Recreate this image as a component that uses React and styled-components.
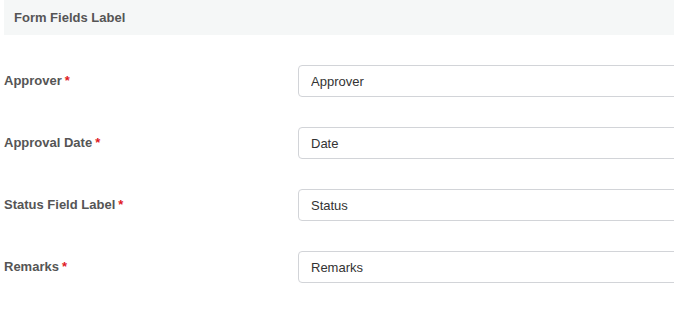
import React from "react";
import styled, { createGlobalStyle } from "styled-components";

const Global = createGlobalStyle`
  html, body { margin: 0; padding: 0; background: #fff; overflow: hidden; }
  body { font-family: "Liberation Sans", Arial, sans-serif; }
`;

const Page = styled.div`
  width: 674px;
  height: 318px;
  overflow: hidden;
`;

const SectionHeader = styled.div`
  margin-left: 4px;
  height: 35px;
  padding-left: 10px;
  display: flex;
  align-items: center;
  background: #f5f7f7;
  color: #555;
  font-size: 13px;
  font-weight: bold;
`;

const Fields = styled.div`
  display: flex;
  flex-direction: column;
  gap: 30px;
  padding: 30px 0 0 4px;
`;

const Row = styled.div`
  display: grid;
  grid-template-columns: 294px 420px;
  align-items: center;
`;

const Label = styled.label`
  color: #555;
  font-size: 13px;
  font-weight: bold;
  margin-top: -2px;
`;

const Required = styled.span`
  color: #e0191f;
  margin-left: 3px;
`;

const Input = styled.input`
  box-sizing: border-box;
  height: 32px;
  width: 100%;
  padding: 0 12px;
  border: 1px solid #d2d4d8;
  border-radius: 4px;
  font-family: "Liberation Sans", Arial, sans-serif;
  font-size: 13px;
  color: #333;
  background: #fff;
  outline: none;
`;

const fields = [
  { label: "Approver", value: "Approver" },
  { label: "Approval Date", value: "Date" },
  { label: "Status Field Label", value: "Status" },
  { label: "Remarks", value: "Remarks" },
];

export default function App() {
  return (
    <Page>
      <Global />
      <SectionHeader>Form Fields Label</SectionHeader>
      <Fields>
        {fields.map((f) => (
          <Row key={f.label}>
            <Label>
              {f.label}
              <Required>*</Required>
            </Label>
            <Input defaultValue={f.value} readOnly />
          </Row>
        ))}
      </Fields>
    </Page>
  );
}
